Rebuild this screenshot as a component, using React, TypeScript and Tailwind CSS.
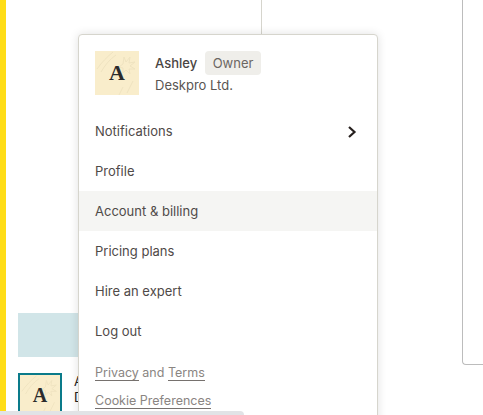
const MENU_ITEMS = ["Profile", "Account & billing", "Pricing plans", "Hire an expert", "Log out"];

function Avatar({ size, textClass }: { size: string; textClass: string }) {
	return (
		<div className={`relative flex shrink-0 items-center justify-center overflow-hidden bg-[#f9edcb] ${size}`}>
			<svg className="absolute inset-0 h-full w-full" viewBox="0 0 44 44" fill="none" stroke="#efe3c0" strokeWidth="1">
				<path d="M2 18C7 11 12 6 18 1" />
				<path d="M6 21C10 14 15 8 21 4" />
				<path d="M29 6l2 5 4-5-1 6 6-1-5 4 5 3-6 0 1 5-4-4-3 3 0-5-4-1 4-3z" />
				<path d="M24 44l4-8M38 30l-6 12" />
			</svg>
			<span className={`relative font-['Liberation_Serif',serif] font-bold leading-none text-[#2b2b2b] ${textClass}`}>A</span>
		</div>
	);
}

function AccountMenu() {
	return (
		<div className="absolute left-[78px] top-[34px] w-[300px] rounded-t border border-[#d6d5cd] bg-white shadow-[0_0_10px_rgba(0,0,0,0.12)]">
			<div className="flex items-start gap-4 px-4 pt-4 pb-4 h-[76px]">
				<Avatar size="h-11 w-11" textClass="text-[22px]" />
				<div className="flex flex-col">
					<div className="flex h-6 items-center gap-2">
						<span className="pt-0.5 text-[13px] font-medium text-[#4a4543]">Ashley</span>
						<span className="rounded-sm bg-[#efeeea] px-[7.5px] py-[3px] text-[13px] leading-[18px] text-[#6b6663]">Owner</span>
					</div>
					<span className="text-[13px] leading-5 text-[#5a5552]">Deskpro Ltd.</span>
				</div>
			</div>
			<div className="flex h-10 items-center justify-between pt-0.5 pl-4 pr-5 text-[13px] text-[#4f4a48]">
				Notifications
				<svg width="10" height="14" viewBox="0 0 10 14" fill="none" stroke="#26201e" strokeWidth="2.2">
					<path d="M2 2l5.5 5L2 12" />
				</svg>
			</div>
			{MENU_ITEMS.map((item) => (
				<div
					key={item}
					className={`flex h-10 items-center px-4 pt-0.5 text-[13px] text-[#4f4a48] ${item === "Account & billing" ? "bg-[#f5f5f3]" : ""}`}
				>
					{item}
				</div>
			))}
			<div className="px-4 pt-[12px] pb-6 text-[12.5px] leading-5 text-[#8a8582]">
				<div>
					<span className="border-b border-[#76716e]">Privacy</span> and{" "}
					<span className="border-b border-[#76716e]">Terms</span>
				</div>
				<div className="mt-2">
					<span className="border-b border-[#76716e]">Cookie Preferences</span>
				</div>
			</div>
		</div>
	);
}

export default function App() {
	return (
		<div className="relative flex h-[415px] w-[483px] overflow-hidden bg-white font-['Inter',sans-serif]">
			<div className="w-1.5 shrink-0 bg-[#ffdd17]" />
			<div className="flex w-[256px] shrink-0 flex-col">
				<div className="h-[313px] shrink-0 border-r border-[#d6d5cd]" />
				<div className="ml-3 h-11 shrink-0 bg-[#d1e5e8]" />
				<div className="mt-4 ml-3 flex shrink-0 gap-3">
					<div className="border-2 border-[#0a7b8a]">
						<Avatar size="h-10 w-10" textClass="text-[20px]" />
					</div>
					<div className="text-[13px] leading-4 text-[#222]">
						<div>Ashley</div>
						<div>Deskpro</div>
					</div>
				</div>
			</div>
			<div className="ml-auto h-[365px] w-[21px] rounded-bl border-b border-l border-[#bcbcbc]" />
			<AccountMenu />
			<div className="absolute bottom-0 left-0 h-1 w-[244px] rounded-tr bg-[#e1e3e6]" />
		</div>
	);
}
